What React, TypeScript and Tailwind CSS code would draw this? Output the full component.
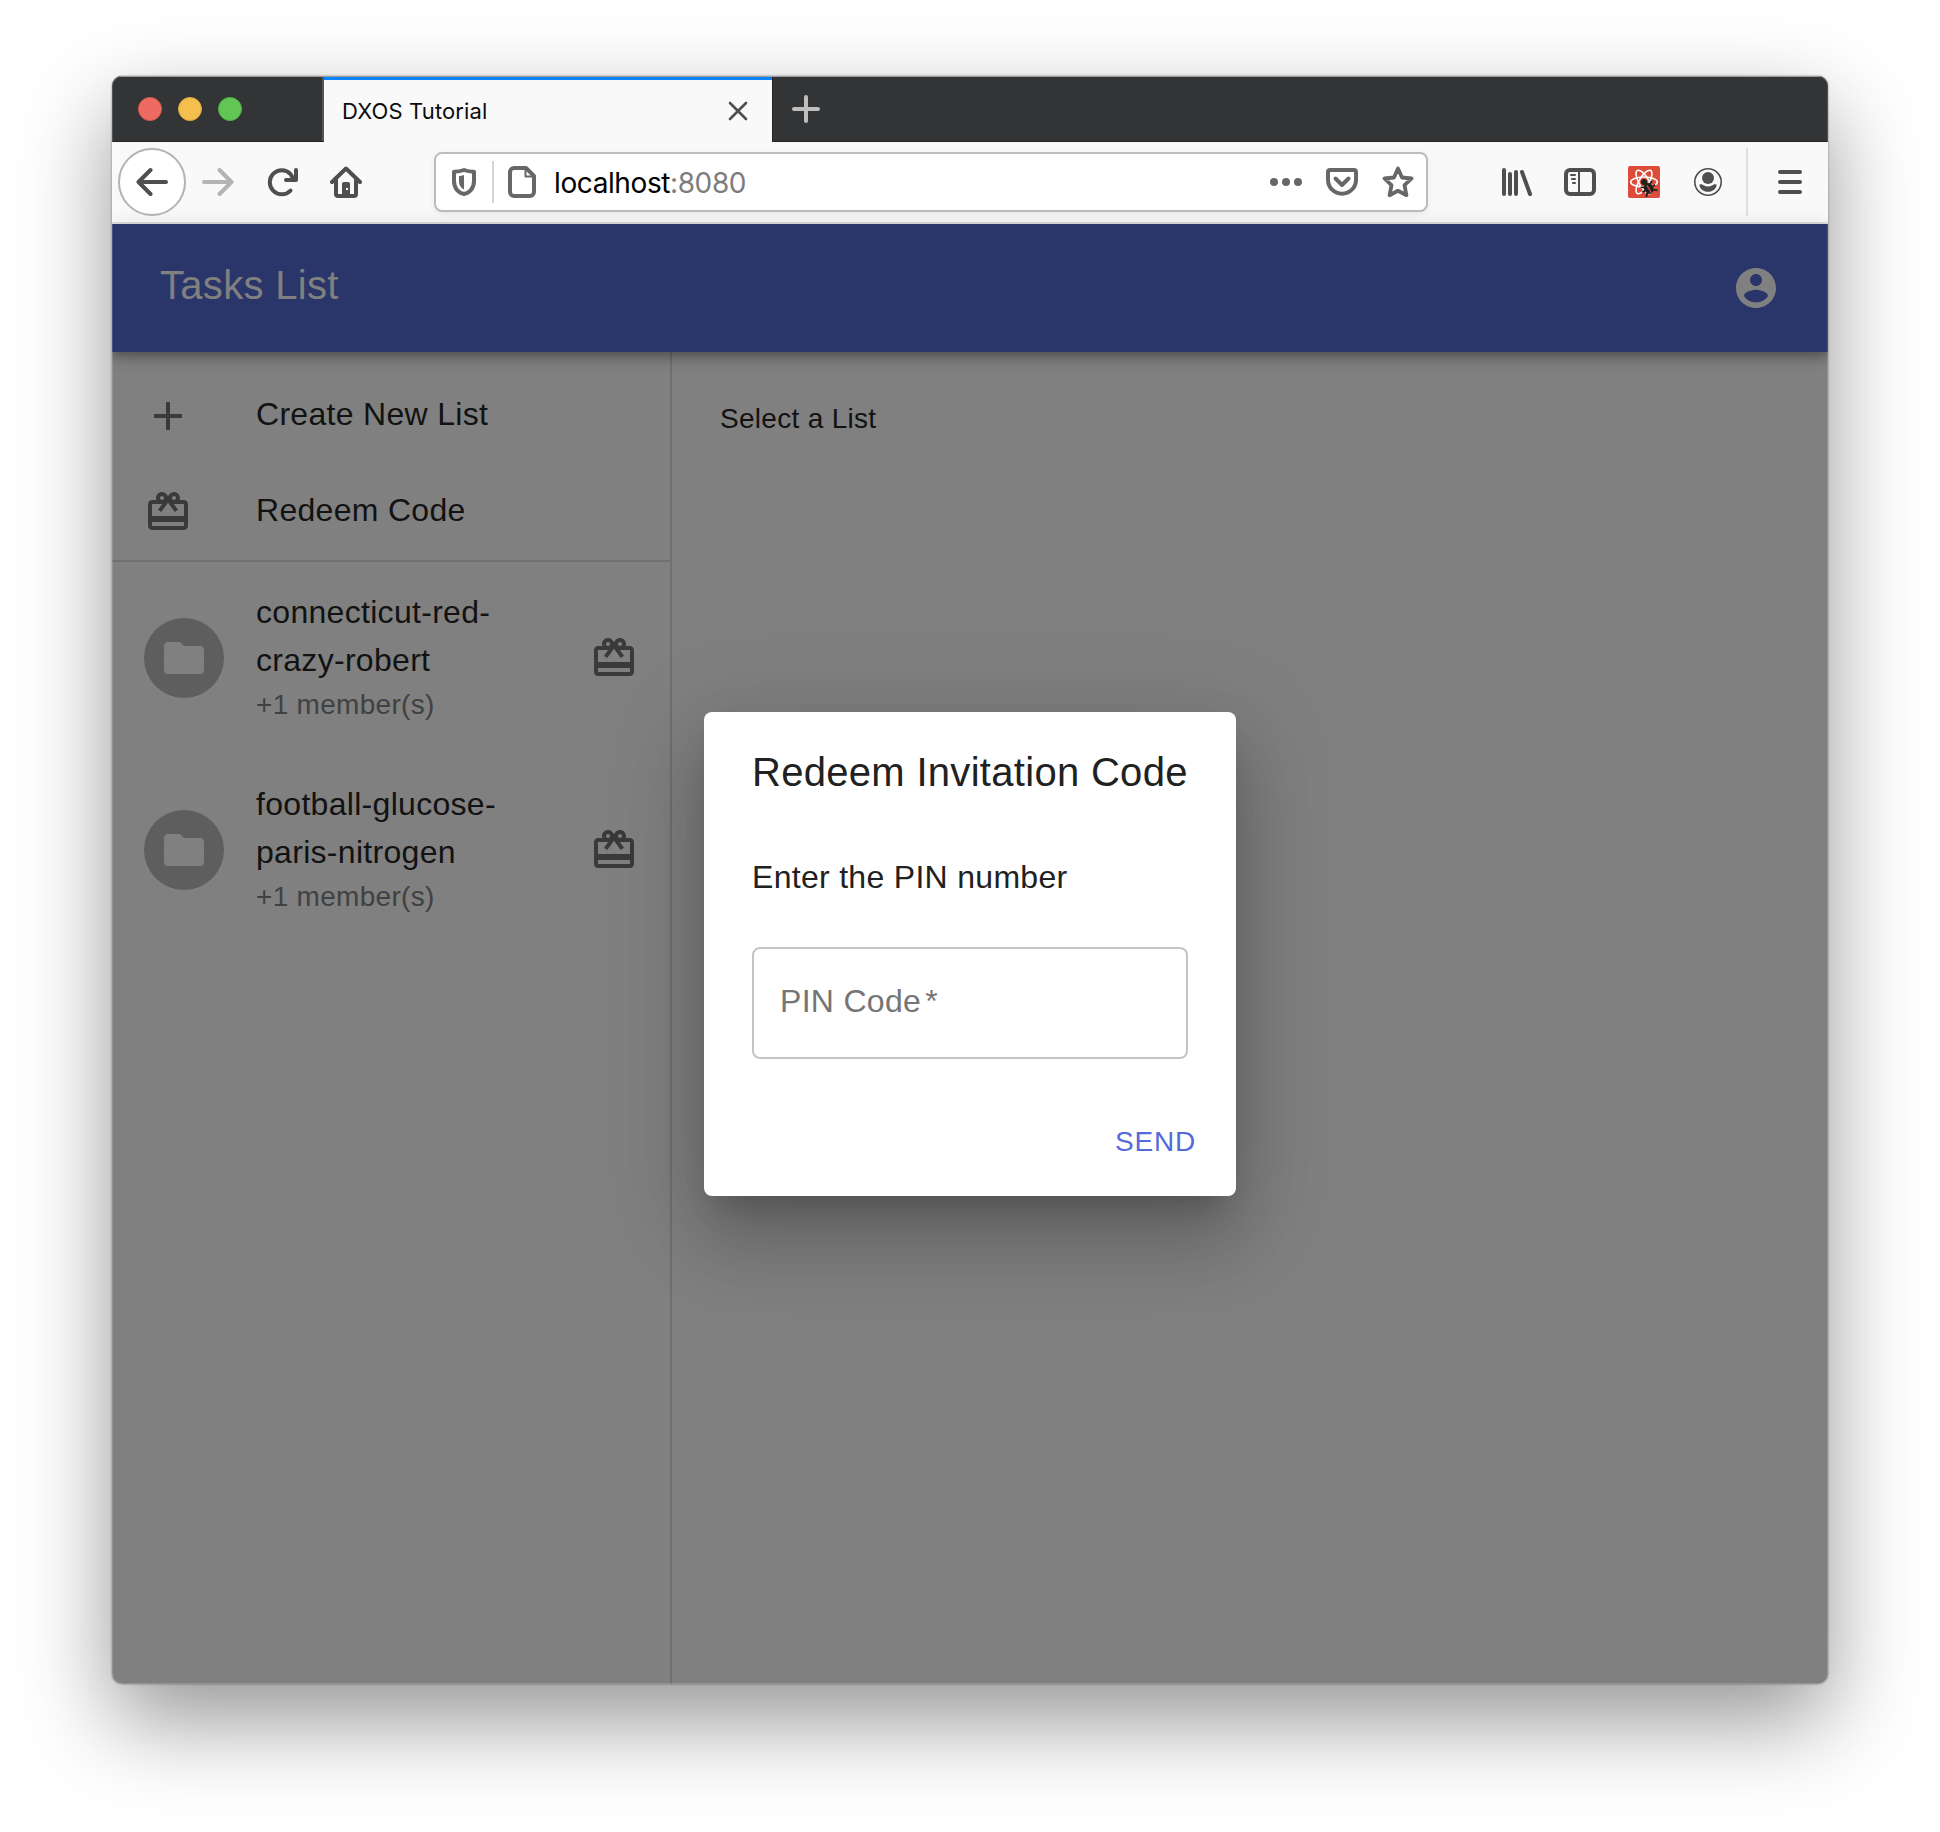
import type { ReactNode } from "react";

type IconProps = { d: string; className?: string };

function MaterialIcon({ d, className = "" }: IconProps) {
  return (
    <svg viewBox="0 0 24 24" className={`size-12 shrink-0 ${className}`} fill="currentColor">
      <path d={d} />
    </svg>
  );
}

const ADD = "M19 13h-6v6h-2v-6H5v-2h6V5h2v6h6v2z";
const FOLDER = "M10 4H4c-1.1 0-1.99.9-1.99 2L2 18c0 1.1.9 2 2 2h16c1.1 0 2-.9 2-2V8c0-1.1-.9-2-2-2h-8l-2-2z";
const REDEEM =
  "M20 6h-2.18c.11-.31.18-.65.18-1 0-1.66-1.34-3-3-3-1.05 0-1.96.54-2.5 1.35l-.5.67-.5-.68C10.96 2.54 10.05 2 9 2 7.34 2 6 3.34 6 5c0 .35.07.69.18 1H4c-1.11 0-1.99.89-1.99 2L2 19c0 1.11.89 2 2 2h16c1.11 0 2-.89 2-2V8c0-1.11-.89-2-2-2zm-5-2c.55 0 1 .45 1 1s-.45 1-1 1-1-.45-1-1 .45-1 1-1zM9 4c.55 0 1 .45 1 1s-.45 1-1 1-1-.45-1-1 .45-1 1-1zm11 15H4v-2h16v2zm0-5H4V8h5.08L7 10.83 8.62 12 11 8.76l1-1.36 1 1.36L15.38 12 17 10.83 14.92 8H20v6z";
const ACCOUNT =
  "M12 2C6.48 2 2 6.48 2 12s4.48 10 10 10 10-4.48 10-10S17.52 2 12 2zm0 3c1.66 0 3 1.34 3 3s-1.34 3-3 3-3-1.34-3-3 1.34-3 3-3zm0 14.2c-2.5 0-4.71-1.28-6-3.22.03-1.99 4-3.08 6-3.08 1.99 0 5.97 1.09 6 3.08-1.29 1.94-3.5 3.22-6 3.22z";

function ToolIcon({ children, className = "" }: { children: ReactNode; className?: string }) {
  return (
    <svg
      viewBox="0 0 32 32"
      className={`size-8 shrink-0 ${className}`}
      fill="none"
      stroke="currentColor"
      strokeWidth="4"
      strokeLinecap="round"
      strokeLinejoin="round"
    >
      {children}
    </svg>
  );
}

function TabStrip() {
  return (
    <div className="flex h-[66px] border-t border-b border-t-[#8a8b8c] border-b-[#232325] bg-[#333436]">
      <div className="flex w-[212px] items-center gap-4 border-r-2 border-[#555658] pl-[26px]">
        <span className="size-6 rounded-full border border-[#d95a50] bg-[#ed6b60]" />
        <span className="size-6 rounded-full border border-[#dca640] bg-[#f5bf4f]" />
        <span className="size-6 rounded-full border border-[#52b045] bg-[#62c655]" />
      </div>
      <div className="-mb-px flex w-[448px] items-center justify-between border-t-[3px] border-[#0a84ff] bg-[#f9f9fa] pl-[18px] pr-6">
        <span className="font-[Inter,sans-serif] text-[22px] leading-none tracking-[0.12px] text-[#0c0c0d]">
          DXOS Tutorial
        </span>
        <svg viewBox="0 0 20 20" className="size-5 text-[#4e4e50]" stroke="currentColor" strokeWidth="2.6" strokeLinecap="round">
          <path d="M2 2l16 16M18 2L2 18" />
        </svg>
      </div>
      <div className="flex items-center border-l border-[#232325] pl-[19px]">
        <svg viewBox="0 0 28 28" className="size-7 text-[#bebebf]" stroke="currentColor" strokeWidth="4" strokeLinecap="round">
          <path d="M14 2v24M2 14h24" />
        </svg>
      </div>
    </div>
  );
}

function AddressBar() {
  return (
    <div className="ml-[72px] flex h-[60px] w-[994px] items-center rounded-[8px] border-2 border-[#bcbcbc] bg-white pl-3 pr-3 text-[#676767] shadow-[0_2px_6px_rgba(0,0,0,0.06)]">
      <span className="mx-1 flex">
        <svg viewBox="0 0 24 28" className="h-7 w-6" fill="none" stroke="currentColor" strokeWidth="4" strokeLinejoin="round">
          <path d="M12 2c3 1.200 6.500 1.700 10 1.800V13c0 7-4.200 12-10 13-5.800-1-10-6-10-13V3.800C5.500 3.700 9 3.200 12 2z" />
          <path d="M7 8c1.800 0 3.500-.4 5-1v14.500c-3.300-1.500-5-4.500-5-8z" fill="currentColor" stroke="none" />
        </svg>
      </span>
      <span className="ml-3 h-[42px] w-0.5 bg-[#d4d4d4]" />
      <ToolIcon className="ml-3">
        <path d="M8 2h12l8 8v16a4 4 0 0 1-4 4H8a4 4 0 0 1-4-4V6a4 4 0 0 1 4-4z" />
        <path d="M19.500 3v7.500H27" strokeWidth="2" />
      </ToolIcon>
      <span className="ml-4 flex-1 pt-0.5 font-[Inter,sans-serif] text-[28px] leading-none tracking-[-0.4px] text-black">
        localhost<span className="text-[#7d7d7d]">:8080</span>
      </span>
      <ToolIcon>
        <g fill="currentColor" stroke="none">
          <circle cx="4" cy="16" r="4" />
          <circle cx="16" cy="16" r="4" />
          <circle cx="28" cy="16" r="4" />
        </g>
      </ToolIcon>
      <ToolIcon className="ml-6">
        <path d="M4 4h24a2 2 0 0 1 2 2v8a14 13.700 0 0 1-28 0V6a2 2 0 0 1 2-2z" />
        <path d="M9.500 12.500l6.500 6.500 6.500-6.500" />
      </ToolIcon>
      <ToolIcon className="ml-6">
        <path d="M16 2.500l4 9 9.500 1-7 6.700 1.900 10L16 24.800l-8.400 4.400 1.900-10-7-6.700 9.500-1z" strokeWidth="3.800" />
      </ToolIcon>
    </div>
  );
}

function ReactDevtoolsIcon() {
  return (
    <svg viewBox="0 0 32 32" className="size-8 shrink-0" fill="none">
      <rect width="32" height="32" rx="2" fill="#dd4b39" />
      <g stroke="#fff" strokeWidth="1.600">
        <ellipse cx="16" cy="16" rx="13.300" ry="5" />
        <ellipse cx="16" cy="16" rx="13.300" ry="5" transform="rotate(60 16 16)" />
        <ellipse cx="16" cy="16" rx="13.300" ry="5" transform="rotate(120 16 16)" />
      </g>
      <circle cx="16" cy="16" r="3" fill="#20201f" />
      <g transform="rotate(-30 20.500 22)">
        <ellipse cx="20.500" cy="22.500" rx="4.600" ry="5.800" fill="#20201f" />
        <path d="M14 17.500l3.500 2m-4.500 3h4m-3 6l3.500-3M27 17.500L23.500 19.500m4.500 3h-4m3 6l-3.500-3" stroke="#20201f" strokeWidth="1.800" />
        <path d="M20.500 19v10" stroke="#dd4b39" strokeWidth="1.200" />
      </g>
    </svg>
  );
}

function Toolbar() {
  return (
    <div className="flex h-[82px] items-center border-b-2 border-[#dedede] bg-[#f9f9fa] pl-[6px] text-[#4f4f50]">
      <span className="flex size-[68px] shrink-0 items-center justify-center rounded-full border-2 border-[#b3b3b3] bg-white">
        <ToolIcon>
          <path d="M30 16H3M14.500 4L2.500 16l12 12" />
        </ToolIcon>
      </span>
      <ToolIcon className="ml-4 text-[#b4b4b4]">
        <path d="M2 16h27M17.500 4l12 12-12 12" />
      </ToolIcon>
      <ToolIcon className="ml-8">
        <path d="M24.500 24.500A12 12 0 1 1 24.500 8l3 5" />
        <path d="M30 4v10H20" />
      </ToolIcon>
      <ToolIcon className="ml-8">
        <path d="M2 16L16 2.500 30 16" />
        <path d="M6 14v14a2 2 0 0 0 2 2h16a2 2 0 0 0 2-2V14" />
        <path d="M12 30V18a2 2 0 0 1 2-2h4a2 2 0 0 1 2 2v12z" fill="currentColor" stroke="none" />
        <rect x="16" y="22" width="2" height="2" fill="#f9f9fa" stroke="none" />
      </ToolIcon>
      <AddressBar />
      <ToolIcon className="ml-[72px]">
        <path d="M4 4v24M10 8v20M16 6v22M22 6l8 22" />
      </ToolIcon>
      <ToolIcon className="ml-8">
        <rect x="2" y="4" width="28" height="24" rx="4" />
        <path d="M15 4v24" strokeWidth="2" />
        <path d="M7 9h4M8 13h3M9 17h2" strokeWidth="2" />
      </ToolIcon>
      <span className="ml-8 flex">
        <ReactDevtoolsIcon />
      </span>
      <ToolIcon className="ml-8">
        <circle cx="16" cy="16" r="13.200" strokeWidth="1.600" />
        <circle cx="16" cy="12" r="6" fill="currentColor" stroke="none" />
        <path d="M7.500 18.500c1.500-.8 3 0 4 .7 3 1.600 6 1.600 9 0 1-.7 2.500-1.500 4-.7.5 4-4 7.300-8.500 7.300s-9-3.300-8.500-7.300z" fill="currentColor" stroke="none" />
      </ToolIcon>
      <span className="ml-[22px] h-[68px] w-0.5 bg-[#dfdfdf]" />
      <ToolIcon className="ml-[26px]">
        <path d="M6 6h20M6 16h20M6 26h20" />
      </ToolIcon>
    </div>
  );
}

function ActionRow({ icon, label }: { icon: string; label: string }) {
  return (
    <li className="flex h-24 items-center pl-8">
      <MaterialIcon d={icon} className="text-[#3a3a3a]" />
      <span className="ml-16 pb-1 text-[32px] leading-[48px] tracking-[0.3px]">{label}</span>
    </li>
  );
}

function ListRow({ name }: { name: string }) {
  return (
    <li className="flex h-48 items-center pl-8 pr-8">
      <span className="flex size-20 shrink-0 items-center justify-center rounded-full bg-[#5e5e5e]">
        <MaterialIcon d={FOLDER} className="text-[#808080]" />
      </span>
      <div className="ml-8 w-[270px] pb-[3px]">
        <p className="text-[32px] leading-[48px] tracking-[0.3px]">{name}</p>
        <p className="pt-px text-[28px] leading-10 tracking-[0.3px] text-[#414141]">+1 member(s)</p>
      </div>
      <MaterialIcon d={REDEEM} className="ml-auto text-[#3a3a3a]" />
    </li>
  );
}

function Sidebar() {
  return (
    <aside className="w-[560px] shrink-0 border-r-2 border-[#707070]">
      <ul className="border-b-2 border-[#707070] pt-4">
        <ActionRow icon={ADD} label="Create New List" />
        <ActionRow icon={REDEEM} label="Redeem Code" />
      </ul>
      <ul>
        <ListRow name="connecticut-red-crazy-robert" />
        <ListRow name="football-glucose-paris-nitrogen" />
      </ul>
    </aside>
  );
}

function RedeemDialog() {
  return (
    <div className="flex h-[484px] w-[532px] flex-col rounded-[8px] bg-white px-12 text-[#212121] shadow-[0_22px_30px_-14px_rgba(0,0,0,0.2),0_48px_76px_6px_rgba(0,0,0,0.14),0_18px_92px_16px_rgba(0,0,0,0.12)]">
      <h2 className="mt-7 whitespace-nowrap text-[40px] leading-[64px] tracking-[0.3px]">Redeem Invitation Code</h2>
      <p className="mt-[49px] text-[32px] leading-[48px] tracking-[0.3px]">Enter the PIN number</p>
      <div className="mt-[46px] flex h-28 items-center rounded-[8px] border-2 border-[#c4c4c4] px-[26px] pb-1 text-[32px] tracking-[0.3px] text-[#757575]">
        PIN Code<span className="pl-1">*</span>
      </div>
      <button className="-mr-2 mt-[58px] self-end text-[28px] leading-[49px] tracking-[0.8px] text-[#536bdb]">SEND</button>
    </div>
  );
}

export default function App() {
  return (
    <div className="h-[1832px] w-[1940px] overflow-hidden bg-white px-28 pt-[76px] font-['Liberation_Sans',Arial,sans-serif]">
      <div className="rounded-[10px] shadow-[0_36px_90px_rgba(0,0,0,0.42),0_0_2px_rgba(0,0,0,0.5)]">
        <div className="relative flex h-[1608px] w-[1716px] flex-col overflow-hidden rounded-[10px] bg-[#808080]">
          <TabStrip />
          <Toolbar />
          <div className="relative flex flex-1 flex-col text-[#121212]">
            <header className="z-10 flex h-32 items-center justify-between bg-[#2a3569] pl-12 pr-12 text-[#808080] shadow-[0_4px_8px_-2px_rgba(0,0,0,0.2),0_8px_10px_rgba(0,0,0,0.14),0_2px_20px_rgba(0,0,0,0.12)]">
              <h1 className="pb-[6px] text-[40px] leading-[64px] tracking-[0.3px]">Tasks List</h1>
              <MaterialIcon d={ACCOUNT} />
            </header>
            <div className="flex flex-1">
              <Sidebar />
              <main className="px-12 pt-[47px] text-[28px] leading-10 tracking-[0.3px]">Select a List</main>
            </div>
            <div className="absolute inset-0 z-20 flex items-center justify-center">
              <RedeemDialog />
            </div>
          </div>
          <div className="pointer-events-none absolute inset-0 z-30 rounded-[10px] border border-white/15" />
        </div>
      </div>
    </div>
  );
}
